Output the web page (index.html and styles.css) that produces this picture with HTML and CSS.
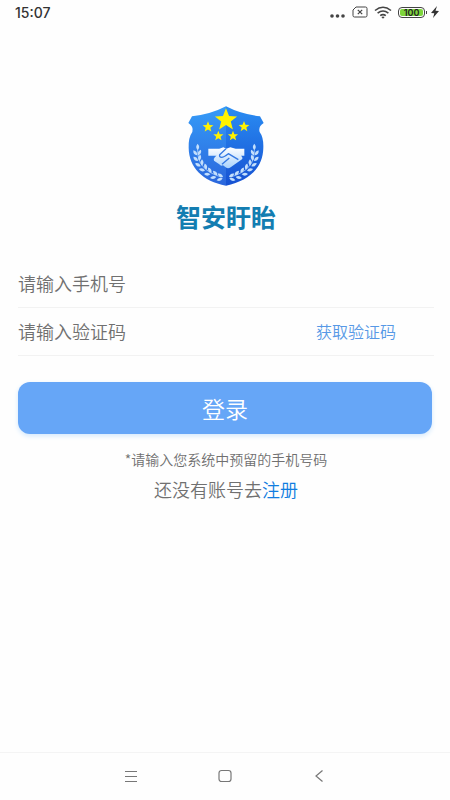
FILE: index.html
```html
<!DOCTYPE html>
<html lang="zh-CN">
<head>
    <meta charset="UTF-8">
    <meta name="viewport" content="width=device-width, initial-scale=1.0">
    <title>智安盱眙</title>
    <link rel="stylesheet" href="styles.css">
</head>
<body>
    <header class="status">
        <span class="clock">15:07</span>
        <div class="status-icons">
            <svg width="16" height="14" viewBox="0 0 16 14" fill="#444">
                <circle cx="2" cy="11" r="1.800"/><circle cx="7.500" cy="11" r="1.800"/><circle cx="13" cy="11" r="1.800"/>
            </svg>
            <svg width="16" height="12" viewBox="0 0 16 12" fill="none" stroke="#444">
                <path d="M4 1h9.500q1.500 0 1.500 1.500v7q0 1.500-1.500 1.500h-11Q1 11 1 9.500V4z"/>
                <path d="M5.800 3.800l4.400 4.400m0-4.400l-4.400 4.400" stroke-width="1.200"/>
            </svg>
            <svg width="18" height="13" viewBox="0 0 18 13" fill="none" stroke="#444" stroke-width="1.600">
                <path d="M1 4.500q8-6.500 16 0M3.600 7.200q5.400-4.400 10.800 0M6.200 9.700q2.800-2.200 5.600 0"/>
                <path d="M7.300 11L9 12.800 10.700 11q-1.700-1.200-3.400 0z" fill="#444" stroke="none"/>
            </svg>
            <div class="battery"><span class="level">100</span></div>
            <svg class="bolt" width="8" height="12" viewBox="0 0 8 12" fill="#333">
                <path d="M6 0L0 7l3.300.2L2 12l6-7-3.500-.2z"/>
            </svg>
        </div>
    </header>

    <main class="login">
        <svg class="logo" width="76" height="80" viewBox="24 22 228 240">
            <defs>
                <linearGradient id="left" x1="0" y1="0" x2="0" y2="1">
                    <stop offset="0" stop-color="#359cf8"/>
                    <stop offset="1" stop-color="#2b66dc"/>
                </linearGradient>
                <linearGradient id="right" x1="0" y1="0" x2="0" y2="1">
                    <stop offset="0" stop-color="#2a8df3"/>
                    <stop offset="1" stop-color="#1651d2"/>
                </linearGradient>
                <linearGradient id="hand" x1="0" y1="0" x2="0" y2="1">
                    <stop offset="0" stop-color="#fff"/>
                    <stop offset="1" stop-color="#a9d2fc"/>
                </linearGradient>
                <path id="star" d="M0-10L2.600-3.400 9.500-3.100 4.100 1.300 5.900 8.100 0 4.200-5.900 8.100-4.100 1.300-9.500-3.100-2.600-3.400z"/>
                <path id="leaf" d="M0 0Q-9-9 0-19Q9-9 0 0z"/>
                <g id="laurel" fill="#c3dffc">
                    <path d="M53 150Q49 214 124 235" fill="none" stroke="#c3dffc" stroke-width="2"/>
                    <use href="#leaf" transform="translate(53 154)"/>
                    <use href="#leaf" transform="translate(51 170) rotate(-35)"/>
                    <use href="#leaf" transform="translate(54 170) rotate(28)"/>
                    <use href="#leaf" transform="translate(54 187) rotate(-47)"/>
                    <use href="#leaf" transform="translate(57 186) rotate(12)"/>
                    <use href="#leaf" transform="translate(62 203) rotate(-60)"/>
                    <use href="#leaf" transform="translate(66 201) rotate(0)"/>
                    <use href="#leaf" transform="translate(75 216) rotate(-75)"/>
                    <use href="#leaf" transform="translate(79 213) rotate(-14)"/>
                    <use href="#leaf" transform="translate(91 227) rotate(-88)"/>
                    <use href="#leaf" transform="translate(94 223) rotate(-30)"/>
                    <use href="#leaf" transform="translate(109 235) rotate(-100)"/>
                    <use href="#leaf" transform="translate(112 230) rotate(-43)"/>
                    <use href="#leaf" transform="translate(128 239) rotate(-108)"/>
                    <use href="#leaf" transform="translate(129 235) rotate(-57)"/>
                </g>
            </defs>
            <path fill="url(#left)" d="M138 23Q92 47 36 53L25 73Q42 84 37 100Q25 116 26 147C27 207 68 247 138 261z"/>
            <path fill="url(#right)" d="M138 23Q184 47 240 53L251 73Q234 84 239 100Q251 116 250 147C249 207 208 247 138 261z"/>
            <g fill="#fff200">
                <use href="#star" transform="translate(138 64) scale(3.500)"/>
                <use href="#star" transform="translate(84 85) scale(1.700)"/>
                <use href="#star" transform="translate(192 84) scale(1.700)"/>
                <use href="#star" transform="translate(115 112) scale(1.600)"/>
                <use href="#star" transform="translate(159 112) scale(1.600)"/>
            </g>
            <use href="#laurel"/>
            <use href="#laurel" transform="translate(276 0) scale(-1 1)"/>
            <path fill="url(#hand)" d="M85 150h33l12-4 9 4 12-4 16 4h26v21h-10q7 6 3 11l-34 24q-8 6-15 0l-8-6q-7 3-11-3l-16-11q-3-5 3-11l5-4H85z"/>
            <path d="M138 150l-19 18q-2 8 6 8 6 0 20-11l30 18M126 197l22-19" fill="none" stroke="#3478e2" stroke-width="4" stroke-linejoin="round"/>
        </svg>
        <h1 class="title">智安盱眙</h1>

        <form class="form">
            <div class="row">
                <input class="field" type="tel" placeholder="请输入手机号" aria-label="手机号">
            </div>
            <div class="row">
                <input class="field" type="text" placeholder="请输入验证码" aria-label="验证码">
                <button class="get-code" type="button">获取验证码</button>
            </div>
            <button class="submit" type="button">登录</button>
        </form>

        <p class="hint">*请输入您系统中预留的手机号码</p>
        <p class="register">还没有账号去<a class="link" href="#">注册</a></p>
    </main>

    <nav class="navbar">
        <button class="nav-btn" type="button" aria-label="菜单">
            <svg width="14" height="14" viewBox="0 0 14 14" fill="none" stroke="#777">
                <path d="M1 2.500h12M1 7.500h12M1 12.500h12"/>
            </svg>
        </button>
        <button class="nav-btn" type="button" aria-label="主页">
            <svg width="14" height="14" viewBox="0 0 14 14" fill="none" stroke="#777" stroke-width="1.200">
                <rect x="1" y="1.500" width="12" height="11" rx="2.500"/>
            </svg>
        </button>
        <button class="nav-btn" type="button" aria-label="返回">
            <svg width="14" height="14" viewBox="0 0 14 14" fill="none" stroke="#777" stroke-width="1.200">
                <path d="M10.500 1.500L4 7l6.500 5.500"/>
            </svg>
        </button>
    </nav>
</body>
</html>
```

FILE: styles.css
```css
* {
    margin: 0;
    padding: 0;
    box-sizing: border-box;
}

body {
    min-height: 100vh;
    display: flex;
    flex-direction: column;
    background-color: #fefefe;
    color: #707070;
    font-family: "Noto Sans CJK SC", sans-serif;
    font-weight: 350;
}
button, input {
    border: none;
    background: none;
    font-family: inherit;
    font-weight: inherit;
}

/* status bar */
.status {
    height: 24px;
    padding: 0 11px 0 15px;
    display: flex;
    align-items: center;
    justify-content: space-between;
}
.clock {
    font-family: Inter, sans-serif;
    font-size: 14px;
    font-weight: 500;
    color: #333;
}
.status-icons {
    display: flex;
    align-items: center;
    gap: 6px;
}
.battery {
    position: relative;
    width: 27px;
    height: 11px;
    padding: 1px;
    border: 1px solid #444;
    border-radius: 4px;
}
.battery::after {
    content: "";
    position: absolute;
    right: -3px;
    top: 3px;
    width: 1px;
    height: 3px;
    background-color: #444;
}
.level {
    display: block;
    border-radius: 2px;
    background-color: #7ed63c;
    color: #222;
    font-family: Inter, sans-serif;
    font-size: 9px;
    font-weight: 600;
    line-height: 7px;
    text-align: center;
}

/* login */
.login {
    flex: 1;
    padding: 82px 16px 0 18px;
    display: flex;
    flex-direction: column;
}
.logo {
    align-self: center;
}
.title {
    margin-top: 12px;
    color: #137db1;
    font-size: 25px;
    font-weight: 700;
    line-height: 36px;
    text-align: center;
}
.form {
    margin-top: 26px;
}
.row {
    height: 48px;
    display: flex;
    border-bottom: 1px solid #f2f2f2;
}
.field {
    flex: 1;
    min-width: 0;
    padding-bottom: 2px;
    outline: none;
    font-size: 18px;
    color: #333;
}
.field::placeholder {
    color: #707070;
}
.get-code {
    padding: 0 38px 2px 0;
    font-size: 16px;
    color: #5799e6;
}
.submit {
    width: calc(100% - 2px);
    height: 52px;
    margin-top: 26px;
    border-radius: 12px;
    background-color: #66a6f7;
    box-shadow: 0 2px 5px #d3e8fc;
    color: white;
    font-size: 23px;
}
.hint {
    margin-top: 15px;
    font-size: 14px;
    line-height: 20px;
    text-align: center;
}
.register {
    margin-top: 8px;
    font-size: 18px;
    line-height: 24px;
    text-align: center;
}
.link {
    color: #117de0;
    text-decoration: none;
}

/* bottom keys */
.navbar {
    height: 48px;
    padding-bottom: 2px;
    border-top: 1px solid #f4f4f4;
    display: flex;
    align-items: center;
    justify-content: center;
    gap: 46px;
}
.nav-btn {
    width: 48px;
    height: 40px;
    display: grid;
    place-items: center;
}
```
